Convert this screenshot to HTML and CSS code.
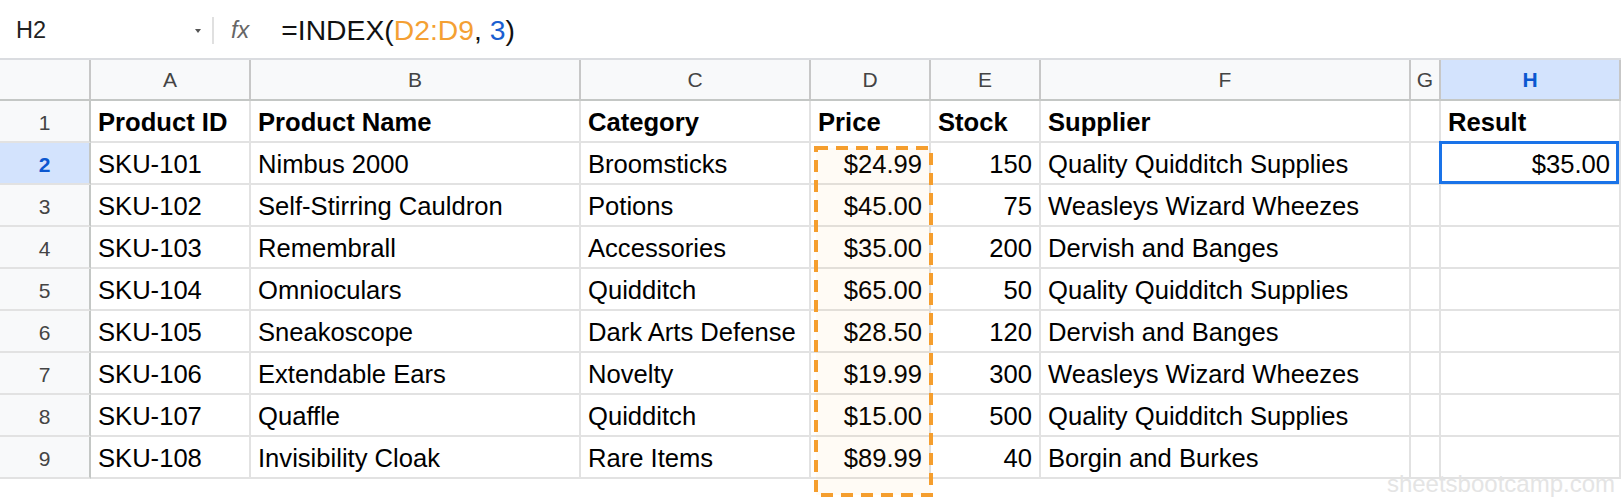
FILE: index.html
```html
<!DOCTYPE html>
<html>
<head>
<meta charset="utf-8">
<link rel="stylesheet" href="styles.css">
</head>
<body>
<div class="formula-bar">
  <div class="namebox"><span class="ref">H2</span><span class="caret"></span></div>
  <div class="sep"></div>
  <span class="fx">fx</span>
  <div class="formula">=INDEX(<span class="rng">D2:D9</span>, <span class="num">3</span>)</div>
</div>
<div class="sheet">
  <div class="c hd corner"></div>
  <div class="c hd">A</div>
  <div class="c hd">B</div>
  <div class="c hd">C</div>
  <div class="c hd">D</div>
  <div class="c hd">E</div>
  <div class="c hd">F</div>
  <div class="c hd">G</div>
  <div class="c hd sel">H</div>

  <div class="c rn">1</div>
  <div class="c b">Product ID</div>
  <div class="c b">Product Name</div>
  <div class="c b">Category</div>
  <div class="c b">Price</div>
  <div class="c b">Stock</div>
  <div class="c b">Supplier</div>
  <div class="c"></div>
  <div class="c b">Result</div>

  <div class="c rn sel">2</div>
  <div class="c">SKU-101</div>
  <div class="c">Nimbus 2000</div>
  <div class="c">Broomsticks</div>
  <div class="c r">$24.99</div>
  <div class="c r">150</div>
  <div class="c">Quality Quidditch Supplies</div>
  <div class="c"></div>
  <div class="c r active">$35.00</div>

  <div class="c rn">3</div>
  <div class="c">SKU-102</div>
  <div class="c">Self-Stirring Cauldron</div>
  <div class="c">Potions</div>
  <div class="c r">$45.00</div>
  <div class="c r">75</div>
  <div class="c">Weasleys Wizard Wheezes</div>
  <div class="c"></div>
  <div class="c"></div>

  <div class="c rn">4</div>
  <div class="c">SKU-103</div>
  <div class="c">Remembrall</div>
  <div class="c">Accessories</div>
  <div class="c r">$35.00</div>
  <div class="c r">200</div>
  <div class="c">Dervish and Banges</div>
  <div class="c"></div>
  <div class="c"></div>

  <div class="c rn">5</div>
  <div class="c">SKU-104</div>
  <div class="c">Omnioculars</div>
  <div class="c">Quidditch</div>
  <div class="c r">$65.00</div>
  <div class="c r">50</div>
  <div class="c">Quality Quidditch Supplies</div>
  <div class="c"></div>
  <div class="c"></div>

  <div class="c rn">6</div>
  <div class="c">SKU-105</div>
  <div class="c">Sneakoscope</div>
  <div class="c">Dark Arts Defense</div>
  <div class="c r">$28.50</div>
  <div class="c r">120</div>
  <div class="c">Dervish and Banges</div>
  <div class="c"></div>
  <div class="c"></div>

  <div class="c rn">7</div>
  <div class="c">SKU-106</div>
  <div class="c">Extendable Ears</div>
  <div class="c">Novelty</div>
  <div class="c r">$19.99</div>
  <div class="c r">300</div>
  <div class="c">Weasleys Wizard Wheezes</div>
  <div class="c"></div>
  <div class="c"></div>

  <div class="c rn">8</div>
  <div class="c">SKU-107</div>
  <div class="c">Quaffle</div>
  <div class="c">Quidditch</div>
  <div class="c r">$15.00</div>
  <div class="c r">500</div>
  <div class="c">Quality Quidditch Supplies</div>
  <div class="c"></div>
  <div class="c"></div>

  <div class="c rn">9</div>
  <div class="c">SKU-108</div>
  <div class="c">Invisibility Cloak</div>
  <div class="c">Rare Items</div>
  <div class="c r">$89.99</div>
  <div class="c r">40</div>
  <div class="c">Borgin and Burkes</div>
  <div class="c"></div>
  <div class="c"></div>

  <svg class="copy-range" width="119" height="351" viewBox="0 0 119 351">
    <rect x="2" y="2" width="115" height="347" fill="#ff9900" fill-opacity="0.04" stroke="#f59e2e" stroke-width="4" stroke-dasharray="12 8"/>
  </svg>
</div>
<div class="watermark">sheetsbootcamp.com</div>
</body>
</html>
```
FILE: styles.css
```css
html, body {
  margin: 0;
  padding: 0;
  background: #ffffff;
}
body {
  position: relative;
  width: 1624px;
  height: 502px;
  overflow: hidden;
  font-family: "Liberation Sans", Arial, sans-serif;
}
.formula-bar {
  height: 58px;
  box-sizing: border-box;
  padding-top: 3px;
  display: flex;
  align-items: center;
}
.namebox {
  width: 212px;
  box-sizing: border-box;
  padding-left: 16px;
  display: flex;
  align-items: center;
}
.ref {
  font-size: 23.5px;
  color: #222;
}
.caret {
  margin-left: auto;
  margin-right: 11px;
  width: 0;
  height: 0;
  border-left: 3px solid transparent;
  border-right: 3px solid transparent;
  border-top: 4px solid #555;
}
.sep {
  width: 2px;
  height: 27px;
  background: #e0e0e0;
}
.fx {
  margin-left: 17px;
  font-size: 23.5px;
  font-style: italic;
  color: #666;
}
.formula {
  margin-left: 32px;
  font-size: 28.3px;
  color: #111;
}
.rng { color: #f4a033; }
.num { color: #1a5fd0; }

.sheet {
  position: relative;
  display: grid;
  grid-template-columns: 91px 160px 330px 230px 120px 110px 370px 30px 180px;
  width: 1621px;
  border-top: 2px solid #dadce0;
}
.c {
  box-sizing: border-box;
  height: 42px;
  border-right: 2px solid #e2e2e2;
  border-bottom: 2px solid #e2e2e2;
  padding: 3px 7px 0;
  display: flex;
  align-items: center;
  font-size: 25.6px;
  color: #000;
  white-space: nowrap;
  overflow: hidden;
}
.hd {
  height: 41px;
  padding-top: 0;
  background: #f8f9fa;
  border-right-color: #c7c7c7;
  border-bottom-color: #c4c7c5;
  justify-content: center;
  font-size: 21px;
  color: #444;
}
.rn {
  background: #f8f9fa;
  border-right-color: #c4c7c5;
  justify-content: center;
  font-size: 21px;
  color: #444;
}
.hd.sel, .rn.sel {
  background: #d3e3fd;
  color: #0b57d0;
  font-weight: bold;
}
.b { font-weight: bold; }
.r { justify-content: flex-end; }
.active {
  position: relative;
  overflow: visible;
  padding-right: 9px;
}
.active::after {
  content: "";
  position: absolute;
  left: -2px;
  top: -2px;
  right: 0;
  bottom: -1px;
  border: 3px solid #1a73e8;
}
.copy-range {
  position: absolute;
  left: 814px;
  top: 86px;
  overflow: visible;
}
.watermark {
  position: absolute;
  right: 9px;
  top: 472px;
  font-size: 24px;
  line-height: 24px;
  color: #e4e4e4;
}
```
